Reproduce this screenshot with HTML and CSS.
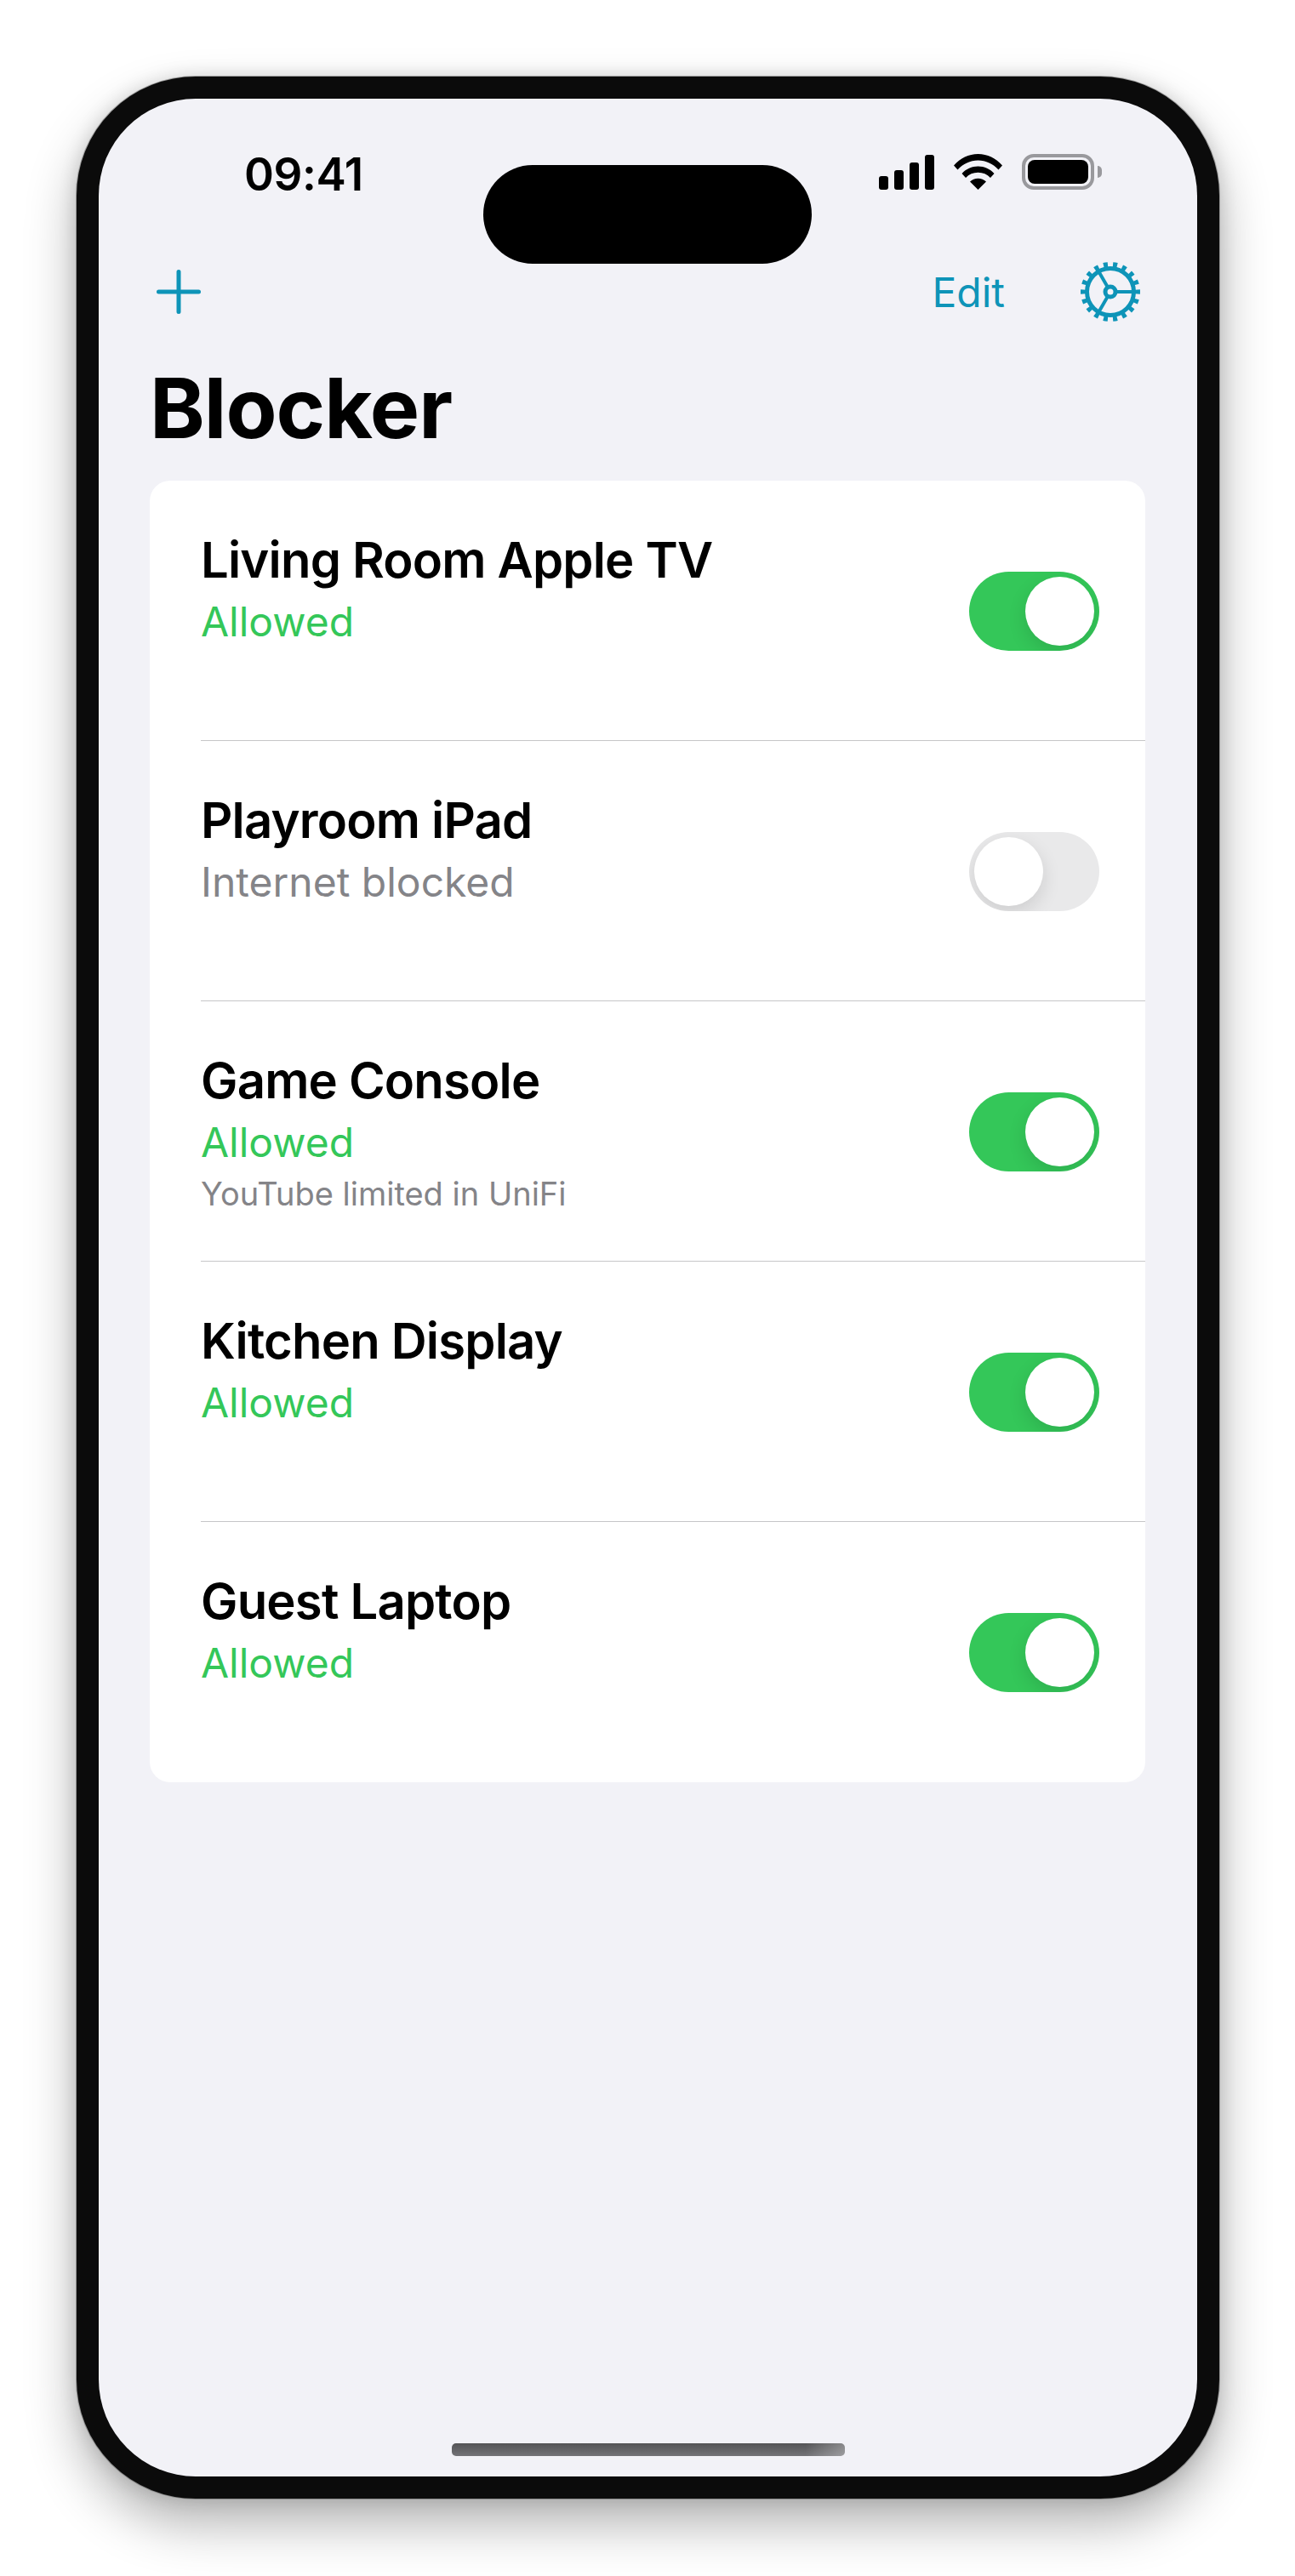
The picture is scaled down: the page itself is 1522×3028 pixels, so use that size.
FILE: index.html
```html
<!DOCTYPE html>
<html lang="en">
<head>
    <meta charset="UTF-8">
    <meta name="viewport" content="width=device-width, initial-scale=1.0">
    <title>Blocker</title>
    <link rel="stylesheet" href="styles.css">
</head>
<body>
    <div class="phone">
        <div class="screen">
            <div class="island"></div>

            <div class="status-bar">
                <span class="time">09:41</span>
                <div class="status-icons">
                    <div class="signal">
                        <span class="bar bar-1"></span>
                        <span class="bar bar-2"></span>
                        <span class="bar bar-3"></span>
                        <span class="bar bar-4"></span>
                    </div>
                    <svg class="wifi" viewBox="0 0 57 42" width="57" height="42">
                        <path d="M0 13.5C7.500 5 17.500 0 28.500 0S49.500 5 57 13.500L52.500 18.500C46 11.500 37.800 7.500 28.500 7.500S11 11.500 4.500 18.500Z"/>
                        <path d="M9.500 23C14.500 17.500 21 14.500 28.500 14.500S42.500 17.500 47.500 23L43 28C39.200 24 34.300 21.800 28.500 21.800S17.800 24 14 28Z"/>
                        <path d="M19 32.500C21.500 30 24.800 28.700 28.500 28.700S35.500 30 38 32.500L28.500 42Z"/>
                    </svg>
                    <div class="battery">
                        <div class="battery-body"><span class="battery-fill"></span></div>
                        <span class="battery-nub"></span>
                    </div>
                </div>
            </div>

            <div class="nav-bar">
                <svg class="plus" viewBox="0 0 52 52" width="52" height="52">
                    <path d="M26 2.500V49.500M2.500 26H49.500"/>
                </svg>
                <div class="nav-right">
                    <span class="edit">Edit</span>
                    <svg class="gear" viewBox="0 0 72 72" width="72" height="72">
                        <circle class="gear-teeth" cx="36" cy="36" r="32" pathLength="18"/>
                        <circle class="gear-ring" cx="36" cy="36" r="27.500"/>
                        <path class="gear-spoke" d="M42 36H62M33 30.800L22.200 12.100M33 41.200L22.200 59.900"/>
                        <circle class="gear-hub" cx="36" cy="36" r="6"/>
                    </svg>
                </div>
            </div>

            <h1 class="title">Blocker</h1>

            <div class="device-list">
                <div class="device-row">
                    <div class="device-text">
                        <div class="device-name">Living Room Apple TV</div>
                        <div class="device-status allowed">Allowed</div>
                    </div>
                    <div class="toggle on"><span class="knob"></span></div>
                </div>
                <div class="device-row">
                    <div class="device-text">
                        <div class="device-name">Playroom iPad</div>
                        <div class="device-status blocked">Internet blocked</div>
                    </div>
                    <div class="toggle off"><span class="knob"></span></div>
                </div>
                <div class="device-row">
                    <div class="device-text">
                        <div class="device-name">Game Console</div>
                        <div class="device-status allowed">Allowed</div>
                        <div class="device-note">YouTube limited in UniFi</div>
                    </div>
                    <div class="toggle on"><span class="knob"></span></div>
                </div>
                <div class="device-row">
                    <div class="device-text">
                        <div class="device-name">Kitchen Display</div>
                        <div class="device-status allowed">Allowed</div>
                    </div>
                    <div class="toggle on"><span class="knob"></span></div>
                </div>
                <div class="device-row">
                    <div class="device-text">
                        <div class="device-name">Guest Laptop</div>
                        <div class="device-status allowed">Allowed</div>
                    </div>
                    <div class="toggle on"><span class="knob"></span></div>
                </div>
            </div>

            <div class="home-indicator"></div>
        </div>
    </div>
</body>
</html>
```

FILE: styles.css
```css
* {
    box-sizing: border-box;
}

body {
    margin: 0;
    background-color: #ffffff;
    font-family: 'Inter', 'Liberation Sans', sans-serif;
    padding: 90px 89px 91px 90px;
}

.phone {
    height: 2847px;
    border: 26px solid #0b0b0b;
    border-radius: 140px;
    background-color: #0b0b0b;
    box-shadow: 0 0 0 1px rgba(90, 90, 90, 0.5), 0 0 22px rgba(0, 0, 0, 0.14), 0 30px 60px rgba(0, 0, 0, 0.3);
}

.screen {
    position: relative;
    height: 100%;
    display: flex;
    flex-direction: column;
    background-color: #f2f2f7;
    border-radius: 114px;
    overflow: hidden;
    padding: 0 60px;
}

.island {
    position: absolute;
    top: 78px;
    left: 452px;
    width: 386px;
    height: 116px;
    background-color: #000000;
    border-radius: 58px;
}

.status-bar {
    display: flex;
    justify-content: space-between;
    align-items: flex-start;
    height: 170px;
    padding: 64px 0 0 111px;
}

.time {
    font-size: 53px;
    font-weight: 600;
    line-height: 50px;
    letter-spacing: -0.4px;
    color: #000000;
}

.status-icons {
    display: flex;
    align-items: flex-end;
    height: 42px;
    margin-top: 1px;
    gap: 23px;
    margin-right: 52px;
}

.signal {
    display: flex;
    align-items: flex-end;
    gap: 7px;
    height: 42px;
}

.bar {
    width: 11px;
    background-color: #000000;
    border-radius: 3px;
}

.bar-1 { height: 16px; }
.bar-2 { height: 23px; }
.bar-3 { height: 32px; }
.bar-4 { height: 41px; }

.battery {
    display: flex;
    align-items: center;
    gap: 4px;
}

.battery-body {
    width: 85px;
    height: 42px;
    padding: 3px;
    border: 4px solid #99999d;
    border-radius: 14px;
}

.battery-fill {
    display: block;
    width: 100%;
    height: 100%;
    background-color: #000000;
    border-radius: 8px;
}

.battery-nub {
    width: 5px;
    height: 14px;
    background-color: #99999d;
    border-radius: 0 7px 7px 0;
}

.nav-bar {
    display: flex;
    justify-content: space-between;
    align-items: center;
    height: 114px;
}

.plus {
    margin-left: 8px;
}

.plus path {
    fill: none;
    stroke: #0e94b8;
    stroke-width: 5;
    stroke-linecap: round;
}

.nav-right {
    display: flex;
    align-items: center;
    gap: 88px;
    margin-right: 6px;
}

.edit {
    font-size: 48px;
    font-weight: 400;
    color: #0e94b8;
}

.gear circle,
.gear path {
    fill: none;
    stroke: #0e94b8;
}

.gear-teeth {
    stroke-width: 6;
    stroke-dasharray: 0.45 0.55;
    stroke-dashoffset: 0.225;
}

.gear-ring {
    stroke-width: 5;
}

.gear-spoke {
    stroke-width: 4;
}

.gear-hub {
    stroke-width: 5;
}

.title {
    margin: 0;
    padding-top: 22px;
    font-size: 98px;
    font-weight: 700;
    line-height: 116px;
    letter-spacing: -1px;
    color: #000000;
    height: 165px;
}

.device-list {
    background-color: #ffffff;
    border-radius: 24px;
    width: 1170px;
}

.device-row {
    height: 306px;
    display: flex;
    justify-content: space-between;
    align-items: center;
    margin-left: 60px;
    padding: 1px 54px 0 0;
    border-bottom: 1px solid #c6c6c8;
}

.device-row:last-child {
    border-bottom: none;
}

.device-text {
    align-self: flex-start;
    padding-top: 57px;
}

.device-name {
    font-size: 58px;
    font-weight: 600;
    line-height: 70px;
    letter-spacing: -0.8px;
    color: #000000;
}

.device-status {
    font-size: 48px;
    font-weight: 400;
    line-height: 60px;
    margin-top: 8px;
}

.allowed {
    color: #34c759;
}

.blocked {
    color: #848488;
}

.device-note {
    font-size: 38px;
    font-weight: 400;
    line-height: 48px;
    margin-top: 6px;
    color: #848488;
}

.toggle {
    display: flex;
    width: 153px;
    height: 93px;
    padding: 6px;
    border-radius: 47px;
    overflow: hidden;
}

.toggle.on {
    background-color: #34c759;
    justify-content: flex-end;
}

.toggle.off {
    background-color: #e9e9ea;
    justify-content: flex-start;
}

.knob {
    width: 81px;
    height: 81px;
    background-color: #ffffff;
    border-radius: 50%;
    box-shadow: 0 8px 22px rgba(0, 0, 0, 0.12);
}

.home-indicator {
    width: 462px;
    height: 15px;
    margin: auto auto 24px;
    border-radius: 5px;
    background: linear-gradient(90deg, transparent 90%, rgba(255, 255, 255, 0.3)), linear-gradient(180deg, #545456, #737377);
}
```
